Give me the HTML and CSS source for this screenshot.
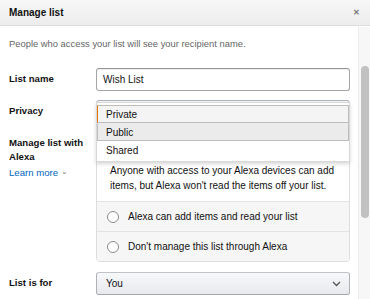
FILE: index.html
```html
<!DOCTYPE html>
<html lang="en">
<head>
    <meta charset="UTF-8">
    <title>Manage list</title>
    <link rel="stylesheet" href="styles.css">
</head>
<body>
    <div class="modal">
        <div class="modal-header">
            <h4>Manage list</h4>
            <span class="close">&#x2715;</span>
        </div>

        <div class="modal-body">
            <p class="note">People who access your list will see your recipient name.</p>

            <div class="form">
                <label class="label">List name</label>
                <div class="field">
                    <input class="text-input" type="text" value="Wish List">
                </div>

                <label class="label">Privacy</label>
                <div class="field field-privacy">
                    <!-- closed select sits under the open menu -->
                    <div class="select"></div>
                    <ul class="menu">
                        <li class="menu-item menu-item-focus">Private</li>
                        <li class="menu-item menu-item-hover">Public</li>
                        <li class="menu-item">Shared</li>
                    </ul>
                </div>

                <div class="label">
                    Manage list with Alexa
                    <a class="learn-more" href="#">Learn more <span class="caret">&#8964;</span></a>
                </div>
                <div class="field">
                    <div class="alexa-box">
                        <div class="alexa-top">
                            <div class="radio-line"></div>
                            <p class="alexa-desc">Anyone with access to your Alexa devices can add items, but Alexa won't read the items off your list.</p>
                        </div>
                        <div class="alexa-option">
                            <span class="radio"></span>
                            Alexa can add items and read your list
                        </div>
                        <div class="alexa-option">
                            <span class="radio"></span>
                            Don't manage this list through Alexa
                        </div>
                    </div>
                </div>

                <label class="label label-for">List is for</label>
                <div class="field field-for">
                    <div class="dropdown">
                        <span>You</span>
                        <svg class="chevron" width="9" height="6" viewBox="0 0 9 6">
                            <path d="M1 1 L4.5 4.5 L8 1" fill="none" stroke="#555" stroke-width="1.3"/>
                        </svg>
                    </div>
                </div>
            </div>
        </div>

        <div class="scrollbar"><div class="thumb"></div></div>
    </div>
</body>
</html>
```

FILE: styles.css
```css
* {
    margin: 0;
    padding: 0;
    box-sizing: border-box;
}

body {
    font-family: "Liberation Sans", Arial, sans-serif;
    color: #111;
    background: #fff;
    width: 370px;
    height: 299px;
    overflow: hidden;
}

.modal {
    position: relative;
    height: 299px;
}

.modal-header {
    height: 26px;
    display: flex;
    align-items: center;
    justify-content: space-between;
    padding: 0 10px 0 9px;
    background: linear-gradient(to bottom, #f8f8f8 0%, #ececec 100%);
    border-bottom: 1px solid #dcdcdc;
}

.modal-header h4 {
    font-size: 10px;
    font-weight: 700;
    color: #111;
}

.close {
    font-size: 8px;
    font-weight: 700;
    color: #777;
}

.modal-body {
    padding: 12px 20px 0 9px;
}

.note {
    font-size: 9.4px;
    line-height: 12px;
    color: #666;
}

.form {
    margin-top: 18px;
    display: grid;
    grid-template-columns: 87px 254px;
    row-gap: 9px;
}

.label {
    font-size: 9.6px;
    font-weight: 700;
    line-height: 14px;
    padding-top: 4px;
    color: #111;
}

.field {
    position: relative;
}

.text-input {
    width: 100%;
    height: 23px;
    border: 1px solid #a6a6a6;
    border-top-color: #949494;
    border-radius: 3px;
    box-shadow: inset 0 1px 0 rgba(0, 0, 0, 0.07);
    padding: 0 6px;
    font-family: inherit;
    font-size: 10px;
    color: #111;
}

.select {
    height: 23px;
    border: 1px solid #adb1b8;
    border-radius: 3px;
    background: linear-gradient(to bottom, #f7f8fa, #e7e9ec);
}

.menu {
    position: absolute;
    top: 2px;
    left: 0;
    width: 254px;
    list-style: none;
    background: #fff;
    border: 1px solid #d8d8d8;
    padding: 2px 0;
    box-shadow: 0 2px 4px rgba(0, 0, 0, 0.16);
    z-index: 2;
}

.menu-item {
    height: 18px;
    line-height: 17px;
    padding-left: 8px;
    font-size: 10px;
    color: #111;
    border: 1px solid transparent;
}

.menu-item-focus {
    background: #f4f4f4;
    border-color: #bdbdbd;
    border-left-color: #e77600;
}

.menu-item-hover {
    background: #ebebeb;
    border-color: #bdbdbd;
    border-top-color: transparent;
}

.learn-more {
    display: block;
    margin-top: 2px;
    font-weight: 400;
    color: #0066c0;
    text-decoration: none;
}

.caret {
    font-size: 8px;
    color: #888;
    position: relative;
    top: -2px;
}

.alexa-box {
    border: 1px solid #ddd;
    border-radius: 4px;
    overflow: hidden;
}

.alexa-top {
    padding: 8px 13px;
}

.radio-line {
    height: 14px;
    margin-bottom: 8px;
}

.alexa-desc {
    font-size: 10px;
    line-height: 15px;
    color: #111;
}

.alexa-option {
    height: 30px;
    display: flex;
    align-items: center;
    gap: 9px;
    padding-left: 10px;
    font-size: 10px;
    background: #f6f6f6;
    border-top: 1px solid #e3e3e3;
}

.radio {
    width: 12px;
    height: 12px;
    border-radius: 50%;
    border: 1px solid #8a8a8a;
    background: #fff;
    flex-shrink: 0;
}

.label-for {
    margin-top: 1px;
}

.field-for {
    margin-top: 1px;
}

.dropdown {
    height: 23px;
    border: 1px solid #adb1b8;
    border-top-color: #c0c3c8;
    border-bottom-color: #a2a6ac;
    border-radius: 3px;
    background: linear-gradient(to bottom, #f7f8fa, #e7e9ec);
    display: flex;
    align-items: center;
    justify-content: space-between;
    padding: 0 8px 0 9px;
    font-size: 10px;
}

.chevron {
    margin-top: 1px;
}

.scrollbar {
    position: absolute;
    top: 27px;
    right: 0;
    width: 12px;
    bottom: 0;
    background: #f7f7f7;
    border-left: 1px solid #ececec;
}

.thumb {
    margin: 39px 0 0 2px;
    width: 8px;
    height: 152px;
    border-radius: 4px;
    background: #c1c1c1;
}
```
